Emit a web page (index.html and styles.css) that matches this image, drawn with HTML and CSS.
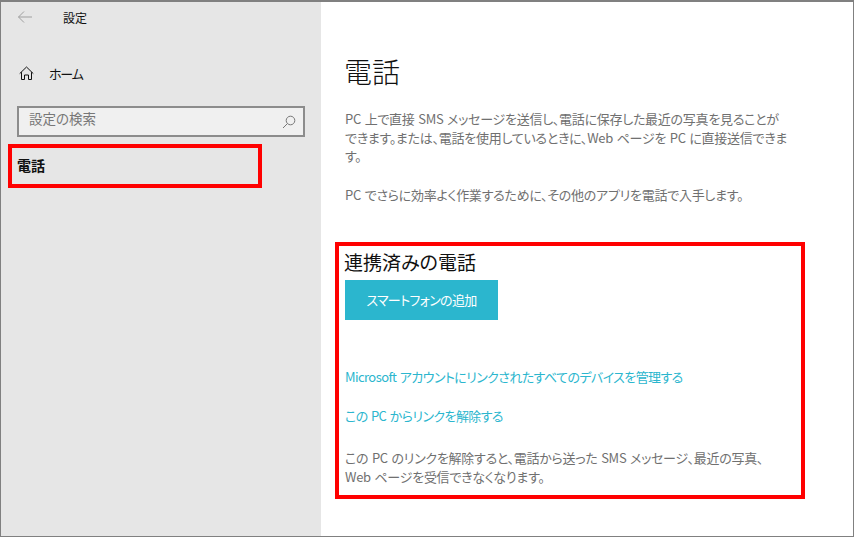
FILE: index.html
```html
<!DOCTYPE html>
<html lang="ja">
<head>
    <meta charset="UTF-8">
    <title>設定</title>
    <link rel="stylesheet" href="styles.css">
</head>
<body>

<div class="window">
    <div class="sidebar">
        <div class="titlebar">
            <svg class="back" width="16" height="14" viewBox="0 0 16 14"><path d="M15 7H1.5M7 1.5L1.5 7L7 12.5" fill="none" stroke="#a0a0a0" stroke-width="1"/></svg>
            <span class="apptitle">設定</span>
        </div>
        <div class="home">
            <svg width="15" height="15" viewBox="0 0 15 15"><path d="M0.7 7.6L7.5 1L14.3 7.6M2.5 6.2V13.5H5.5V9H9.5V13.5H12.5V6.2" fill="none" stroke="#111" stroke-width="1"/></svg>
            <span>ホーム</span>
        </div>
        <div class="search">
            <span>設定の検索</span>
            <svg width="14" height="14" viewBox="0 0 14 14"><circle cx="8.5" cy="5.5" r="4.3" fill="none" stroke="#777"/><path d="M5.4 8.6L1 13" stroke="#777" fill="none"/></svg>
        </div>
        <div class="navitem">電話</div>
    </div>

    <div class="content">
        <h1>電話</h1>
        <p class="intro">PC 上で直接 SMS メッセージを送信し、電話に保存した最近の写真を見ることが<br>できます。または、電話を使用しているときに、Web ページを PC に直接送信できま<br>す。</p>
        <p class="more">PC でさらに効率よく作業するために、その他のアプリを電話で入手します。</p>

        <h2>連携済みの電話</h2>
        <button class="addphone">スマートフォンの追加</button>
        <a class="link first">Microsoft アカウントにリンクされたすべてのデバイスを管理する</a>
        <a class="link second">この PC からリンクを解除する</a>
        <p class="note">この PC のリンクを解除すると、電話から送った SMS メッセージ、最近の写真、<br>Web ページを受信できなくなります。</p>
    </div>

    <!-- red annotation boxes -->
    <div class="mark mark-nav"></div>
    <div class="mark mark-section"></div>
</div>

</body>
</html>
```

FILE: styles.css
```css
* {
    box-sizing: border-box;
}
html, body {
    margin: 0;
    height: 100%;
}
body {
    font-family: "Noto Sans CJK JP", "Noto Sans", sans-serif;
    font-feature-settings: "palt";
    font-size: 13px;
    background-color: #fff;
}
.window {
    position: relative;
    display: flex;
    width: 854px;
    height: 537px;
    border: 1px solid #808080;
    border-top-width: 2px;
    overflow: hidden;
}
.sidebar {
    width: 320px;
    flex-shrink: 0;
    background-color: #e6e6e6;
    color: #111;
}
.titlebar {
    display: flex;
    align-items: center;
    height: 30px;
    padding-left: 16px;
}
.apptitle {
    margin-left: 30px;
    font-size: 12px;
}
.home {
    display: flex;
    align-items: center;
    gap: 15px;
    margin-top: 31px;
    padding-left: 18px;
    height: 20px;
    letter-spacing: -1.2px;
}
.search {
    display: flex;
    align-items: center;
    justify-content: space-between;
    width: 288px;
    height: 31px;
    margin: 23px 0 0 16px;
    padding: 0 7px 7px 10px;
    background-color: #f0f0f0;
    border: 2px solid #8c8c8c;
    color: #777;
    font-size: 13.5px;
}
.search svg {
    margin-top: 7px;
}
.navitem {
    margin: 18px 0 0 16px;
    font-size: 14px;
    font-weight: 700;
    line-height: 20px;
}
.content {
    flex: 1;
    padding: 0 0 0 24px;
    color: #707070;
}
h1 {
    margin: 47px 0 0 -1px;
    font-size: 28px;
    font-weight: 300;
    line-height: 44px;
    color: #111;
}
.intro {
    margin: 17px 0 0;
    line-height: 18.7px;
    letter-spacing: -0.27px;
    word-spacing: 1px;
    white-space: nowrap;
}
.more {
    margin: 19px 0 0;
    line-height: 19px;
    letter-spacing: -0.27px;
    word-spacing: 1px;
}
h2 {
    margin: 45px 0 0 -1px;
    font-size: 19px;
    font-weight: 400;
    line-height: 26px;
    color: #111;
}
.addphone {
    display: block;
    width: 153px;
    height: 40px;
    margin-top: 5px;
    padding: 0 0 2px;
    border: 0;
    background-color: #2bb6ce;
    color: #fff;
    font: inherit;
    font-feature-settings: inherit;
    letter-spacing: -0.65px;
}
.link {
    display: block;
    line-height: 20px;
    color: #2bb6ce;
    letter-spacing: -0.58px;
    word-spacing: 1px;
}
.first {
    margin-top: 47px;
}
.second {
    margin-top: 19px;
}
.note {
    margin: 23px 0 0;
    line-height: 18.5px;
    letter-spacing: -0.27px;
    word-spacing: 1px;
    white-space: nowrap;
}
.mark {
    position: absolute;
    border: 4px solid #f00;
}
.mark-nav {
    left: 7px;
    top: 142px;
    width: 254px;
    height: 44px;
}
.mark-section {
    left: 334px;
    top: 240px;
    width: 470px;
    height: 257px;
}
```
